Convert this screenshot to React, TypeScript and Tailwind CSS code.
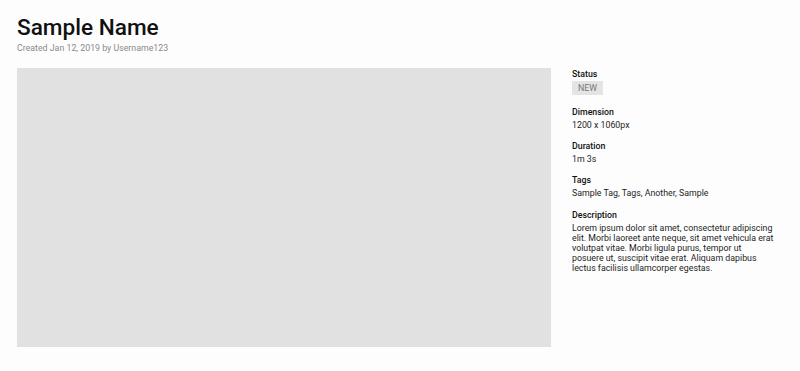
const details = [
  { label: "Dimension", value: "1200 x 1060px" },
  { label: "Duration", value: "1m 3s" },
  { label: "Tags", value: "Sample Tag, Tags, Another, Sample" },
];

const descriptionLines = [
  "Lorem ipsum dolor sit amet, consectetur adipiscing",
  "elit. Morbi laoreet ante neque, sit amet vehicula erat",
  "volutpat vitae. Morbi ligula purus, tempor ut",
  "posuere ut, suscipit vitae erat. Aliquam dapibus",
  "lectus facilisis ullamcorper egestas.",
];

export default function App() {
  return (
    <div className="min-h-[371px] w-[800px] bg-[#fdfdfd] px-[17px] pt-[14px] font-['Roboto',sans-serif] text-[#1a1a1a]">
      <header>
        <h1 className="text-[22.6px] font-medium leading-[28px] text-[#111]">
          Sample Name
        </h1>
        <p className="text-[8.8px] leading-[12px] text-[#8a8a8a]">
          Created Jan 12, 2019 by Username123
        </p>
      </header>

      <div className="mt-[14px] flex gap-[21px]">
        <div className="h-[279px] w-[534px] shrink-0 bg-[#e1e1e1]" />

        <aside className="flex w-[211px] flex-col gap-[7px] text-[8.8px]">
          <section className="mb-[3px]">
            <h2 className="font-medium leading-[12px] text-[#111]">Status</h2>
            <span className="mt-[1px] inline-block bg-[#e4e4e4] px-[6px] py-[1px] leading-[12px] text-[#777]">
              NEW
            </span>
          </section>

          {details.map((d) => (
            <section key={d.label}>
              <h2 className="font-medium leading-[14px] text-[#111]">
                {d.label}
              </h2>
              <p className="leading-[13px] text-[#1e1e1e]">{d.value}</p>
            </section>
          ))}

          <section className="mt-[1px]">
            <h2 className="font-medium leading-[14px] text-[#111]">
              Description
            </h2>
            <p className="mt-[1px] leading-[10px] text-[#1e1e1e]">
              {descriptionLines.map((line) => (
                <span key={line} className="block whitespace-nowrap">
                  {line}
                </span>
              ))}
            </p>
          </section>
        </aside>
      </div>
    </div>
  );
}
